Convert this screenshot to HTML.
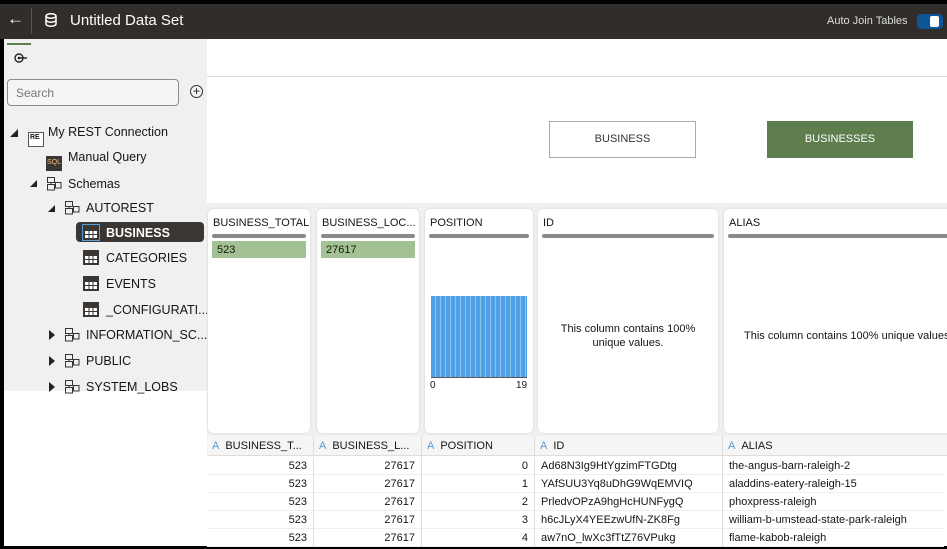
<!DOCTYPE html><html><head><style>
*{margin:0;padding:0;box-sizing:border-box}
body{width:947px;height:549px;background:#000;font-family:"Liberation Sans",sans-serif;position:relative;overflow:hidden;color:#161513}
.a{position:absolute}
.hdr{left:0;top:4px;width:947px;height:35px;background:#312d2a;color:#fff}
.side{left:4px;top:39px;width:203px;height:352px;background:#f1f0f0}
.tr{position:absolute;font-size:12.5px;color:#161513;white-space:nowrap}
.card{position:absolute;top:209px;height:224px;background:#fff;border-radius:5px;box-shadow:0 0 2px rgba(0,0,0,.15)}
.ct{position:absolute;left:5px;top:8px;font-size:11px}
.bar{position:absolute;left:4px;right:4px;top:25px;height:4px;border-radius:2px;background:#8a8a8a}
.grn{position:absolute;left:4px;right:4px;top:32px;height:17px;background:#a3c293;font-size:11px;padding:3px 5px}
.th{position:absolute;top:436px;height:20px;font-size:11px;padding:4px 5px;border-right:1px solid #ddd}
.th b{color:#5b9bd5;font-weight:normal;margin-right:6px}
.cell{position:absolute;height:18px;font-size:11px;padding:3px 6px;border-right:1px solid #ddd;border-bottom:1px solid #eee;white-space:nowrap;overflow:hidden}
.ic{display:inline-block;vertical-align:-3px;margin-right:7px}
</style></head><body>
<svg width="0" height="0" style="position:absolute"><defs>
<symbol id="t" viewBox="0 0 16 15"><rect x="0" y="0" width="16" height="15" fill="#3a3633"/><rect x="2" y="6" width="12" height="7" fill="#fff"/><path d="M2 9.5h12M6 6v7M10 6v7" stroke="#3a3633" stroke-width="1"/></symbol>
<symbol id="s" viewBox="0 0 16 15"><rect x="1.5" y="1.5" width="7" height="5" fill="none" stroke="#333"/><rect x="1.5" y="8.5" width="7" height="5.5" fill="none" stroke="#333"/><rect x="9.5" y="6.5" width="5.5" height="5.5" fill="none" stroke="#333"/><path d="M5 6.5v2M8.5 9h1" stroke="#333"/></symbol>
</defs></svg>
<div class="a hdr">
 <div class="a" style="left:7px;top:5px;font-size:17px">←</div>
 <div class="a" style="left:31px;top:4px;width:1px;height:26px;background:#555"></div>
 <svg class="a" style="left:45px;top:9px" width="12" height="14" viewBox="0 0 12 14"><ellipse cx="6" cy="3" rx="5" ry="2.2" fill="none" stroke="#fff" stroke-width="1.5"/><path d="M1 3v8c0 1.2 2.2 2.2 5 2.2s5-1 5-2.2V3M1 7c0 1.2 2.2 2.2 5 2.2S11 8.2 11 7" fill="none" stroke="#fff" stroke-width="1.5"/></svg>
 <div class="a" style="left:70px;top:8px;font-size:15px">Untitled Data Set</div>
 <div class="a" style="left:827px;top:11px;font-size:11px;color:#ddd">Auto Join Tables</div>
 <div class="a" style="left:917px;top:10px;width:26px;height:15px;border-radius:4px;background:#0c5596"><div class="a" style="left:13px;top:2px;width:9px;height:11px;border-radius:2px;background:#fff"></div></div>
</div>
<div class="a" style="left:4px;top:39px;width:943px;height:507px;background:#fff"></div>
<div class="a side">
 <div class="a" style="left:3px;top:4px;width:24px;height:2px;background:#5e7e4d"></div>
 <svg class="a" style="left:10px;top:14px" width="14" height="10"><circle cx="5" cy="5" r="4" fill="none" stroke="#222" stroke-width="1.4"/><circle cx="5" cy="5" r="1.3" fill="#222"/><path d="M5 5h8" stroke="#222" stroke-width="1.4"/></svg>
 <div class="a" style="left:3px;top:40px;width:172px;height:27px;border:1px solid #8c8c8c;border-radius:4px;background:#f5f5f5;font-size:12px;color:#777;padding:6px 8px">Search</div>
 <div class="a" style="left:186px;top:46px;width:13px;height:13px;border:1.3px solid #333;border-radius:50%;font-size:12px;line-height:10px;text-align:center">+</div>
 <svg class="a" style="left:6px;top:90px" width="8" height="8"><path d="M8 0V8H0Z" fill="#222"/></svg>
 <div class="tr" style="left:24px;top:86px"><span style="display:inline-block;width:16px;height:15px;border:1px solid #555;font-size:7px;font-weight:bold;vertical-align:-3px;margin-right:4px;background:#fff;padding:1px">RE</span>My REST Connection</div>
 <div class="tr" style="left:42px;top:111px"><span style="display:inline-block;width:16px;height:15px;background:#3a3633;color:#f0c080;font-size:7px;vertical-align:-3px;margin-right:6px;padding:3px 1px">SQL</span>Manual Query</div>
 <svg class="a" style="left:26px;top:141px" width="7" height="7"><path d="M7 0V7H0Z" fill="#222"/></svg>
 <div class="tr" style="left:42px;top:137px"><svg class="ic" width="16" height="15" style="margin-right:6px"><use href="#s"/></svg>Schemas</div>
 <svg class="a" style="left:44px;top:166px" width="7" height="7"><path d="M7 0V7H0Z" fill="#222"/></svg>
 <div class="tr" style="left:60px;top:161px"><svg class="ic" width="16" height="15" style="margin-right:6px"><use href="#s"/></svg>AUTOREST</div>
 <div class="a" style="left:72px;top:183px;width:128px;height:20px;background:#3a3633;border-radius:4px"></div>
 <div class="tr" style="left:79px;top:186px;color:#fff;font-weight:bold"><svg class="ic" width="16" height="15" style="outline:1px solid #5b9bd5"><use href="#t"/></svg>BUSINESS</div>
 <div class="tr" style="left:79px;top:211px"><svg class="ic" width="16" height="15"><use href="#t"/></svg>CATEGORIES</div>
 <div class="tr" style="left:79px;top:237px"><svg class="ic" width="16" height="15"><use href="#t"/></svg>EVENTS</div>
 <div class="tr" style="left:79px;top:263px"><svg class="ic" width="16" height="15"><use href="#t"/></svg>_CONFIGURATI...</div>
 <svg class="a" style="left:45px;top:291px" width="6" height="10"><path d="M0 0L6 5L0 10Z" fill="#222"/></svg>
 <div class="tr" style="left:60px;top:288px"><svg class="ic" width="16" height="15" style="margin-right:6px"><use href="#s"/></svg>INFORMATION_SC...</div>
 <svg class="a" style="left:45px;top:317px" width="6" height="10"><path d="M0 0L6 5L0 10Z" fill="#222"/></svg>
 <div class="tr" style="left:60px;top:314px"><svg class="ic" width="16" height="15" style="margin-right:6px"><use href="#s"/></svg>PUBLIC</div>
 <svg class="a" style="left:45px;top:343px" width="6" height="10"><path d="M0 0L6 5L0 10Z" fill="#222"/></svg>
 <div class="tr" style="left:60px;top:340px"><svg class="ic" width="16" height="15" style="margin-right:6px"><use href="#s"/></svg>SYSTEM_LOBS</div>
</div>
<div class="a" style="left:207px;top:76px;width:740px;height:1px;background:#ddd"></div>
<div class="a" style="left:549px;top:121px;width:147px;height:37px;border:1px solid #aaa;background:#fff;font-size:11px;text-align:center;line-height:35px;color:#333">BUSINESS</div>
<div class="a" style="left:767px;top:121px;width:146px;height:37px;background:#5e7e4d;font-size:11px;text-align:center;line-height:37px;color:#fff">BUSINESSES</div>
<div class="a" style="left:207px;top:203px;width:740px;height:233px;background:#f1f0f0"></div>
<div class="card" style="left:208px;width:102px"><div class="ct">BUSINESS_TOTAL</div><div class="bar"></div><div class="grn">523</div></div>
<div class="card" style="left:317px;width:102px"><div class="ct">BUSINESS_LOC...</div><div class="bar"></div><div class="grn">27617</div></div>
<div class="card" style="left:425px;width:108px"><div class="ct">POSITION</div><div class="bar"></div>
 <div class="a" style="left:6px;top:87px;width:96px;height:82px;background:repeating-linear-gradient(90deg,#4fa0e6 0,#4fa0e6 4px,#8cc4f0 4px,#8cc4f0 5px);border-bottom:1px solid #555"></div>
 <div class="a" style="left:5px;top:171px;font-size:10px">0</div><div class="a" style="left:91px;top:171px;font-size:10px">19</div></div>
<div class="card" style="left:538px;width:180px"><div class="ct">ID</div><div class="bar"></div><div class="a" style="left:0;right:0;top:113px;text-align:center;font-size:11px;line-height:14px">This column contains 100%<br>unique values.</div></div>
<div class="card" style="left:724px;width:230px"><div class="ct">ALIAS</div><div class="bar"></div><div class="a" style="left:20px;top:121px;font-size:11px;white-space:nowrap">This column contains 100% unique values.</div></div>
<div class="a" style="left:207px;top:436px;width:740px;height:20px;background:#f5f5f5;border-bottom:1px solid #ddd"></div>
<div class="th" style="left:207px;width:107px"><b>A</b>BUSINESS_T...</div>
<div class="th" style="left:314px;width:108px"><b>A</b>BUSINESS_L...</div>
<div class="th" style="left:422px;width:113px"><b>A</b>POSITION</div>
<div class="th" style="left:535px;width:188px"><b>A</b>ID</div>
<div class="th" style="left:723px;width:221px;border:0"><b>A</b>ALIAS</div>
<div id="rows"></div>
<script>
var ids=["Ad68N3Ig9HtYgzimFTGDtg","YAfSUU3Yq8uDhG9WqEMVIQ","PrledvOPzA9hgHcHUNFygQ","h6cJLyX4YEEzwUfN-ZK8Fg","aw7nO_lwXc3fTtZ76VPukg"];
var al=["the-angus-barn-raleigh-2","aladdins-eatery-raleigh-15","phoxpress-raleigh","william-b-umstead-state-park-raleigh","flame-kabob-raleigh"];
var h="";for(var i=0;i<5;i++){var t=457+i*18;
h+='<div class="cell" style="left:207px;top:'+t+'px;width:107px;text-align:right">523</div>';
h+='<div class="cell" style="left:314px;top:'+t+'px;width:108px;text-align:right">27617</div>';
h+='<div class="cell" style="left:422px;top:'+t+'px;width:113px;text-align:right">'+i+'</div>';
h+='<div class="cell" style="left:535px;top:'+t+'px;width:188px">'+ids[i]+'</div>';
h+='<div class="cell" style="left:723px;top:'+t+'px;width:221px;border-right:0">'+al[i]+'</div>';}
document.getElementById("rows").innerHTML=h;
</script>
</body></html>
